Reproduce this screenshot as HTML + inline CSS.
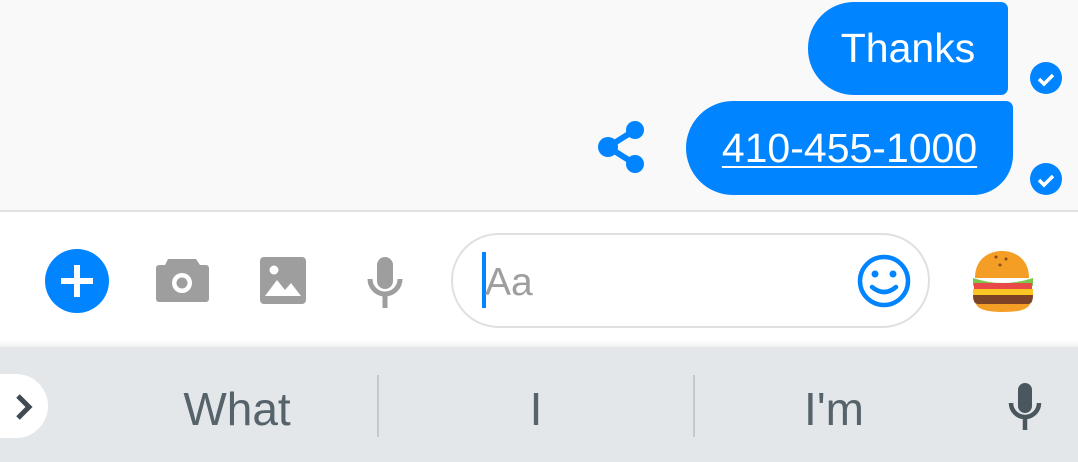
<!DOCTYPE html>
<html><head><style>
body{margin:0;width:1078px;height:462px;overflow:hidden;position:relative;font-family:"Liberation Sans",sans-serif;background:#fff}
.a{position:absolute}
.chat{left:0;top:0;width:1078px;height:210px;background:#f9f9f9;border-bottom:2px solid #e2e2e2}
.b{background:#0084ff;color:#fff;font-size:41px;display:flex;align-items:center;justify-content:center}
.kb{left:0;top:347px;width:1078px;height:115px;background:#e3e7ea}
.w{color:#56636b;font-size:46px;top:382px;transform:translateX(-50%)}
.dv{width:2px;height:62px;top:375px;background:#c3c8cb}
</style></head><body>
<div class="a chat"></div>
<div class="a b" style="left:808px;top:2px;width:200px;height:93px;border-radius:46px 7px 7px 46px">Thanks</div>
<div class="a b" style="left:686px;top:101px;width:327px;height:94px;border-radius:47px 7px 40px 47px"><span style="text-decoration:underline;text-underline-offset:4px;text-decoration-thickness:2px">410-455-1000</span></div>
<svg class="a" style="left:1029px;top:62px" width="34" height="134"><circle cx="17" cy="16" r="16" fill="#0084ff"/><path d="M10 17l5 5 9-9" stroke="#fff" stroke-width="3.5" fill="none"/><circle cx="17" cy="117" r="16" fill="#0084ff"/><path d="M10 118l5 5 9-9" stroke="#fff" stroke-width="3.5" fill="none"/></svg>
<svg class="a" style="left:596px;top:120px" width="54" height="56"><path d="M39 10L12 27 39 44" stroke="#0084ff" stroke-width="6" fill="none"/><circle cx="12" cy="27" r="10" fill="#0084ff"/><circle cx="39" cy="10" r="9" fill="#0084ff"/><circle cx="39" cy="44" r="9" fill="#0084ff"/></svg>
<div class="a" style="left:0;top:340px;width:1078px;height:8px;background:linear-gradient(#fff,#eef0f1)"></div>
<svg class="a" style="left:44px;top:248px" width="66" height="66"><circle cx="33" cy="33" r="32" fill="#0084ff"/><path d="M33 17v32M17 33h32" stroke="#fff" stroke-width="6"/></svg>
<svg class="a" style="left:154px;top:253px" width="56" height="52"><path d="M14 6h28l4 6h6a3 3 0 0 1 3 3v31a3 3 0 0 1-3 3H5a3 3 0 0 1-3-3V15a3 3 0 0 1 3-3h6z" fill="#9e9e9e"/><circle cx="28" cy="30" r="10" fill="#fff"/><circle cx="28" cy="30" r="5.5" fill="#9e9e9e"/></svg>
<svg class="a" style="left:259px;top:256px" width="48" height="50"><rect x="1" y="1" width="46" height="47" rx="4" fill="#9e9e9e"/><circle cx="15" cy="14" r="4.5" fill="#fff"/><path d="M6 40l12-16 8 10 6-7 10 13z" fill="#fff"/></svg>
<svg class="a" style="left:365px;top:255px" width="40" height="54"><rect x="12" y="2" width="16" height="32" rx="8" fill="#9e9e9e"/><path d="M5 24a15 15 0 0 0 30 0M20 40v13" stroke="#9e9e9e" stroke-width="5" fill="none"/></svg>
<div class="a" style="left:451px;top:233px;width:475px;height:91px;border:2px solid #e0e0e0;border-radius:48px"></div>
<div class="a" style="left:482px;top:252px;width:4px;height:56px;background:#0084ff"></div>
<div class="a" style="left:485px;top:261px;font-size:39px;color:#9e9e9e">Aa</div>
<svg class="a" style="left:856px;top:253px" width="56" height="56"><circle cx="28" cy="28" r="24" stroke="#0084ff" stroke-width="4.5" fill="none"/><circle cx="19" cy="21" r="3.5" fill="#0084ff"/><circle cx="37" cy="21" r="3.5" fill="#0084ff"/><path d="M16 34q12 10 24 0" stroke="#0084ff" stroke-width="4.5" fill="none" stroke-linecap="round"/></svg>
<svg class="a" style="left:970px;top:248px" width="66" height="66"><path d="M5 30C5 10 20 3 32 3s27 7 27 27z" fill="#f49e26"/><circle cx="26" cy="9" r="1.5" fill="#8a4a1c"/><circle cx="36" cy="11" r="1.5" fill="#8a4a1c"/><circle cx="30" cy="17" r="1.5" fill="#8a4a1c"/><path d="M3 30q30 10 60 0v8H3z" fill="#7bc74d"/><path d="M4 35h58v6H4z" fill="#e94848"/><path d="M3 41h60v6H3z" fill="#fcc624"/><path d="M3 47h60q0 8-4 9H7q-4-1-4-9z" fill="#7d4326"/><path d="M6 56h54q-3 8-27 8T6 56z" fill="#f49e26"/></svg>
<div class="a kb"></div>
<div class="a" style="left:0;top:374px;width:48px;height:64px;background:#fff;border-radius:0 32px 32px 0"></div>
<svg class="a" style="left:12px;top:392px" width="26" height="30"><path d="M6 4l11 11L6 26" stroke="#3f4a52" stroke-width="5" fill="none"/></svg>
<div class="a w" style="left:237px">What</div>
<div class="a dv" style="left:377px"></div>
<div class="a w" style="left:536px">I</div>
<div class="a dv" style="left:693px"></div>
<div class="a w" style="left:834px">I'm</div>
<svg class="a" style="left:1005px;top:382px" width="40" height="50"><rect x="13" y="1" width="14" height="30" rx="7" fill="#4a575f"/><path d="M6 21a14 14 0 0 0 28 0M20 36v12" stroke="#4a575f" stroke-width="4.5" fill="none"/></svg>
</body></html>
